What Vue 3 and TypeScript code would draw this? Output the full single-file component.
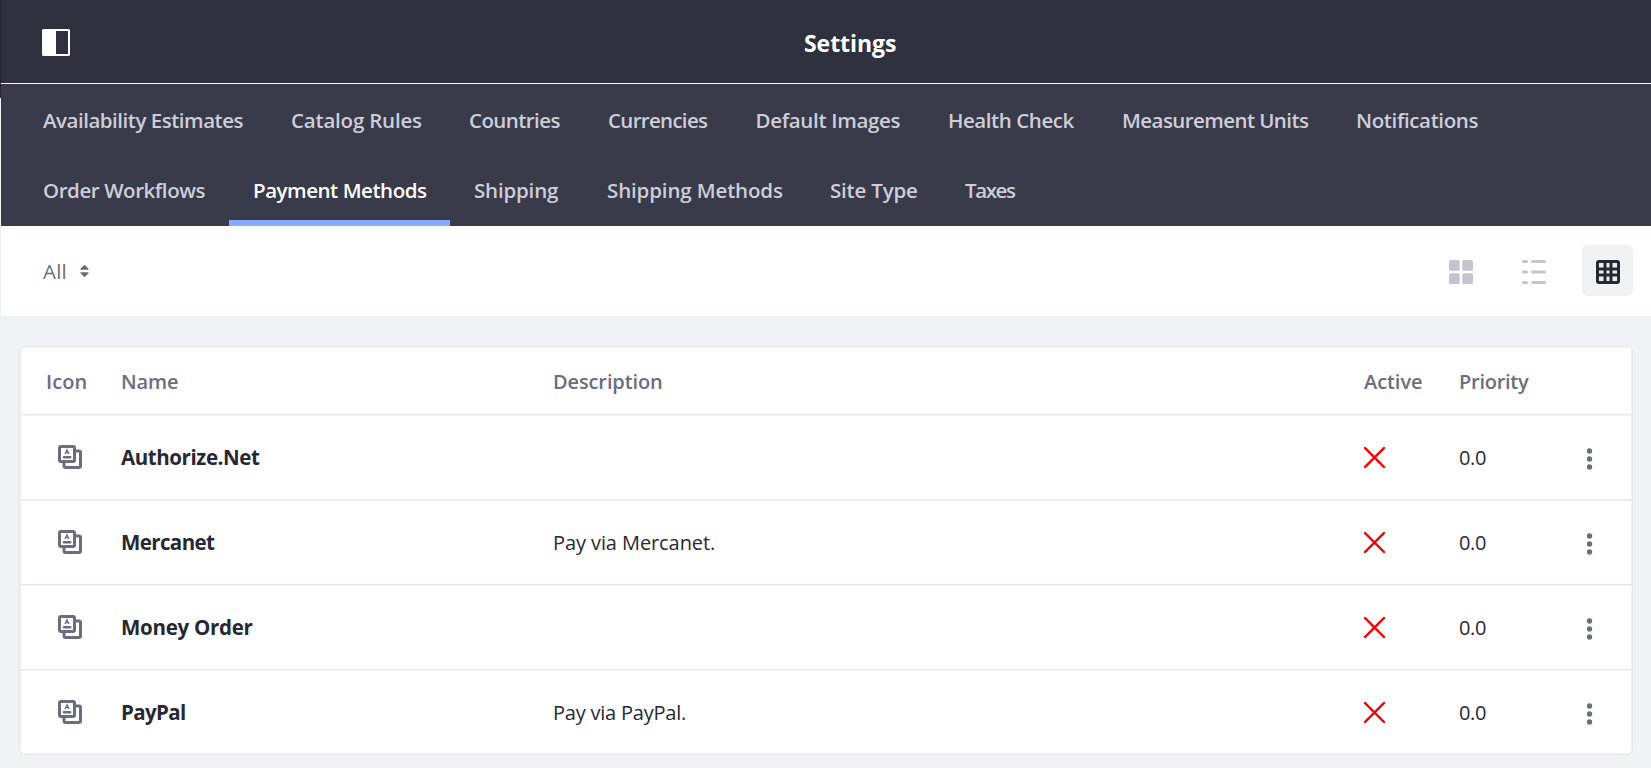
<script setup lang="ts">
interface Label {
  text: string
  width: number
}
interface Tab extends Label {
  box: number
  active?: boolean
}
interface Method {
  name: Label
  description?: Label
}

const tabRows: Tab[][] = [
  [
    { text: 'Availability Estimates', width: 200.5, box: 248 },
    { text: 'Catalog Rules', width: 130, box: 178 },
    { text: 'Countries', width: 90.5, box: 139 },
    { text: 'Currencies', width: 99, box: 147.5 },
    { text: 'Default Images', width: 144, box: 192.5 },
    { text: 'Health Check', width: 125.5, box: 174 },
    { text: 'Measurement Units', width: 186, box: 234 },
    { text: 'Notifications', width: 121.5, box: 170 },
  ],
  [
    { text: 'Order Workflows', width: 161.5, box: 210 },
    { text: 'Payment Methods', width: 173, box: 221, active: true },
    { text: 'Shipping', width: 84, box: 133 },
    { text: 'Shipping Methods', width: 175, box: 223 },
    { text: 'Site Type', width: 86, box: 135 },
    { text: 'Taxes', width: 51, box: 99 },
  ],
]

const methods: Method[] = [
  { name: { text: 'Authorize.Net', width: 139 } },
  { name: { text: 'Mercanet', width: 93 }, description: { text: 'Pay via Mercanet.', width: 160 } },
  { name: { text: 'Money Order', width: 130.5 } },
  { name: { text: 'PayPal', width: 63 }, description: { text: 'Pay via PayPal.', width: 131 } },
]

const context = document.createElement('canvas').getContext('2d')!

// Tracks a label so that its visible glyphs span the requested width.
function tracking(label: Label, weight: number, size: number) {
  context.font = `${weight} ${size}px "Open Sans"`
  const m = context.measureText(label.text)
  const ink = m.actualBoundingBoxRight + m.actualBoundingBoxLeft
  return { letterSpacing: `${((label.width - ink) / (label.text.length - 1)).toFixed(3)}px` }
}
</script>

<template>
  <div class="page">
    <header class="topbar">
      <svg class="toggle" width="28" height="27" viewBox="0 0 28 27">
        <path fill="#fff" fill-rule="evenodd" d="M1 0H27L28 1V26L27 27H1L0 26V1ZM14 2V25H26V2Z" />
      </svg>
      <h1 class="title" :style="tracking({ text: 'Settings', width: 91 }, 700, 23)">Settings</h1>
    </header>

    <nav class="nav">
      <div v-for="(row, i) in tabRows" :key="i" class="nav-row">
        <a
          v-for="tab in row"
          :key="tab.text"
          class="tab"
          :class="{ active: tab.active }"
          :style="{ width: tab.box + 'px', ...tracking(tab, 600, 20.5) }"
          >{{ tab.text }}</a
        >
      </div>
    </nav>

    <div class="toolbar">
      <div class="filter">
        <span :style="tracking({ text: 'All', width: 22.5 }, 400, 20.5)">All</span>
        <svg width="9" height="12" viewBox="0 0 9 12" fill="#6b6c7e">
          <path d="M4 .2Q4.5-.2 5 .2L8.4 3.6Q9 4.7 8 4.8H1Q0 4.7.6 3.6ZM4 11.8Q4.5 12.2 5 11.8L8.4 8.4Q9 7.3 8 7.2H1Q0 7.3.6 8.4Z" />
        </svg>
      </div>
      <div class="views">
        <button class="view">
          <svg width="24" height="24" viewBox="0 0 24 24" fill="#c5c4ce">
            <rect width="10.7" height="10.7" rx="1.5" />
            <rect x="13.3" width="10.7" height="10.7" rx="1.5" />
            <rect y="13.3" width="10.7" height="10.7" rx="1.5" />
            <rect x="13.3" y="13.3" width="10.7" height="10.7" rx="1.5" />
          </svg>
        </button>
        <button class="view">
          <svg width="24" height="24" viewBox="0 0 24 24" fill="#c5c4ce">
            <rect width="6" height="3" rx="1.5" />
            <rect x="9" width="15" height="3" rx="1.5" />
            <rect y="10.5" width="6" height="3" rx="1.5" />
            <rect x="9" y="10.5" width="15" height="3" rx="1.5" />
            <rect y="21" width="6" height="3" rx="1.5" />
            <rect x="9" y="21" width="15" height="3" rx="1.5" />
          </svg>
        </button>
        <button class="view selected">
          <svg width="24" height="24" viewBox="0 0 24 24" fill="#272833">
            <path
              fill-rule="evenodd"
              d="M3 0H21A3 3 0 0 1 24 3V21A3 3 0 0 1 21 24H3A3 3 0 0 1 0 21V3A3 3 0 0 1 3 0ZM3 3V7.5H7.5V3ZM10.5 3V7.5H13.5V3ZM16.5 3V7.5H21V3ZM3 10.5V13.5H7.5V10.5ZM10.5 10.5V13.5H13.5V10.5ZM16.5 10.5V13.5H21V10.5ZM3 16.5V21H7.5V16.5ZM10.5 16.5V21H13.5V16.5ZM16.5 16.5V21H21V16.5Z"
            />
          </svg>
        </button>
      </div>
    </div>

    <main class="card">
      <div class="row head">
        <span :style="tracking({ text: 'Icon', width: 39.5 }, 600, 20)">Icon</span>
        <span :style="tracking({ text: 'Name', width: 56 }, 600, 20)">Name</span>
        <span :style="tracking({ text: 'Description', width: 108 }, 600, 20)">Description</span>
        <span :style="tracking({ text: 'Active', width: 58 }, 600, 20)">Active</span>
        <span :style="tracking({ text: 'Priority', width: 69 }, 600, 20)">Priority</span>
        <span></span>
      </div>
      <div v-for="method in methods" :key="method.name.text" class="row">
        <svg class="doc" width="24" height="24" viewBox="0 0 24 24">
          <g fill="none" stroke="#6b6c7e" stroke-width="3">
            <rect x="1.5" y="1.5" width="15" height="15" rx="1.5" />
            <path d="M18 6H21Q22.5 6 22.5 7.5V21Q22.5 22.5 21 22.5H7.5Q6 22.5 6 21V18" />
          </g>
          <rect x="4.8" y="11" width="8.6" height="2.6" rx="1" fill="#6b6c7e" />
          <path d="M7 9L9 4.7L11 9M7.8 7.6H10.2" fill="none" stroke="#6b6c7e" stroke-width="1.3" />
        </svg>
        <strong :style="tracking(method.name, 700, 20.5)">{{ method.name.text }}</strong>
        <span class="text" :style="method.description ? tracking(method.description, 400, 20) : {}">{{
          method.description?.text
        }}</span>
        <svg class="cross" width="21" height="21" viewBox="0 0 21 21">
          <path d="M.9.9L20.1 20.1M20.1.9L.9 20.1" stroke="#f50000" stroke-width="2.3" stroke-linecap="round" />
        </svg>
        <span class="text" :style="tracking({ text: '0.0', width: 26 }, 400, 20)">0.0</span>
        <svg class="dots" width="6" height="22" viewBox="0 0 6 22" fill="#6b6c7e">
          <circle cx="2.5" cy="3" r="2.7" />
          <circle cx="2.5" cy="11" r="2.7" />
          <circle cx="2.5" cy="19" r="2.7" />
        </svg>
      </div>
    </main>
  </div>
</template>

<style>
body {
  margin: 0;
  background: #f1f2f5;
}
</style>

<style scoped>
.page {
  box-sizing: border-box;
  height: 768px;
  overflow: hidden;
  padding-left: 1px;
  background: linear-gradient(#272833 98px, transparent 98px) left top / 1px 100% no-repeat #f1f2f5;
  color: #272833;
  font-family: 'Open Sans', 'Noto Sans', sans-serif;
  white-space: nowrap;
}
svg {
  display: block;
}
.topbar {
  box-sizing: border-box;
  height: 84px;
  display: grid;
  grid-template-columns: 762px 1fr;
  align-items: start;
  padding-left: 41px;
  background: #30313f;
  border-bottom: 1px solid #f7f8fa;
}
.toggle {
  margin-top: 29px;
}
.title {
  margin: 27px 0 0;
  color: #fff;
  font-size: 23px;
  line-height: 32px;
  font-weight: 700;
}
.nav {
  height: 142px;
  padding-left: 18px;
  background: #393a4a;
}
.nav-row {
  display: flex;
  height: 71px;
}
.nav-row:first-child {
  height: 70px;
}
.nav-row:last-child {
  height: 72px;
}
.tab {
  box-sizing: border-box;
  flex: none;
  padding: 21px 0 0 24px;
  color: #cdced9;
  font-size: 20.5px;
  line-height: 30px;
  font-weight: 600;
}
.tab.active {
  color: #fff;
  box-shadow: inset 0 -6px #85abff;
}
.toolbar {
  display: flex;
  justify-content: space-between;
  align-items: flex-start;
  height: 90px;
  padding: 0 18px 0 42px;
  background: #fff;
}
.filter {
  display: flex;
  align-items: center;
  gap: 13px;
  margin-top: 31px;
  color: #6b6c7e;
  font-size: 20.5px;
  line-height: 28px;
}
.views {
  display: flex;
  gap: 22px;
  margin-top: 19px;
}
.view {
  display: grid;
  place-items: center;
  width: 51px;
  height: 51px;
  padding: 2px 1px 0 0;
  border: 0;
  border-radius: 5px;
  background: transparent;
}
.view.selected {
  padding-right: 0;
  background: #f1f2f5;
}
.card {
  box-sizing: border-box;
  width: 1614px;
  height: 409px;
  margin: 30px 0 0 18px;
  border: 1px solid #e7e7ed;
  border-radius: 6px;
  background: #fff;
  box-shadow: inset 0 0 0 1px #f1f2f5;
}
.row {
  display: grid;
  grid-template-columns: 75px 432px 811px 95px 128px 1fr;
  align-items: center;
  height: 84px;
  padding-left: 26px;
  border-bottom: 1px solid #e7e7ed;
  font-size: 20px;
  line-height: 28px;
}
.row + .row {
  box-shadow: inset 0 1px #f1f2f5;
}
.row:last-child {
  border-bottom: 0;
}
.head {
  height: 67px;
  color: #6b6c7e;
  font-weight: 600;
}
.head span {
  padding-top: 2px;
}
.row strong {
  font-size: 20.5px;
  font-weight: 700;
}
.text {
  padding-top: 2px;
}
.doc {
  margin-left: 12px;
}
.dots {
  margin-top: 3px;
}
</style>
